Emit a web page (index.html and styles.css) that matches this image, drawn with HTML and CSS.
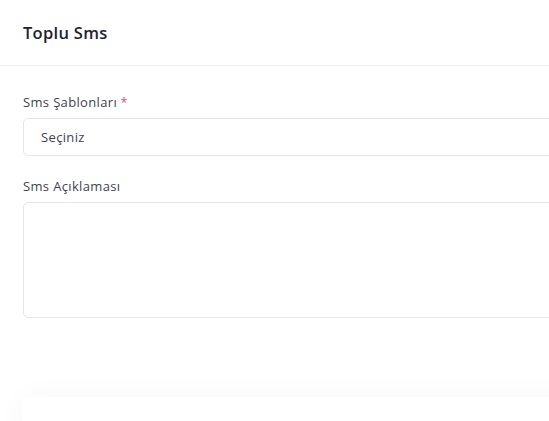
FILE: index.html
```html
<!DOCTYPE html>
<html lang="tr">
<head>
<meta charset="utf-8">
<link rel="stylesheet" href="styles.css">
</head>
<body>
<div class="page">
  <section class="card">
    <header class="card-header">
      <h3 class="card-title">Toplu Sms</h3>
    </header>
    <div class="card-body">
      <div class="field">
        <label class="label">Sms Şablonları <span class="req">*</span></label>
        <div class="select">Seçiniz</div>
      </div>
      <div class="field">
        <label class="label">Sms Açıklaması</label>
        <div class="textarea"></div>
      </div>
    </div>
  </section>
  <section class="card card2"></section>
</div>
</body>
</html>
```
FILE: styles.css
```css
html, body {
  margin: 0;
  padding: 0;
  background: #ffffff;
  overflow: hidden;
  height: 421px;
}
body {
  font-family: "Open Sans", "Noto Sans", sans-serif;
  color: #3f4254;
}
.page {
  width: 680px;
  display: flex;
  flex-direction: column;
}
.card {
  background: #fff;
}
.card-header {
  height: 65px;
  border-bottom: 1px solid #eff0f5;
  display: flex;
  align-items: center;
  padding: 0 23px;
}
.card-title {
  margin: 0;
  font-size: 16.5px;
  font-weight: 600;
  color: #1e2133;
  letter-spacing: 0.3px;
}
.card-body {
  padding: 28px 0 37px 23px;
  display: flex;
  flex-direction: column;
  gap: 22px;
}
.field {
  display: flex;
  flex-direction: column;
  gap: 7px;
}
.label {
  font-size: 13px;
  color: #3f4254;
  line-height: 17px;
  letter-spacing: 0.35px;
}
.req {
  color: #f1416c;
  font-size: 12px;
}
.select {
  height: 36px;
  border: 1px solid #e4e6ef;
  border-radius: 5px;
  padding: 0 17px;
  display: flex;
  align-items: center;
  font-size: 13px;
  letter-spacing: 0.35px;
  color: #3f4254;
}
.textarea {
  height: 114px;
  border: 1px solid #e4e6ef;
  border-radius: 5px;
}
.card2 {
  margin-left: 22px;
  margin-top: 42px;
  height: 80px;
  border-radius: 5px;
  box-shadow: 0 0 30px rgba(0, 0, 0, 0.035);
}
```
